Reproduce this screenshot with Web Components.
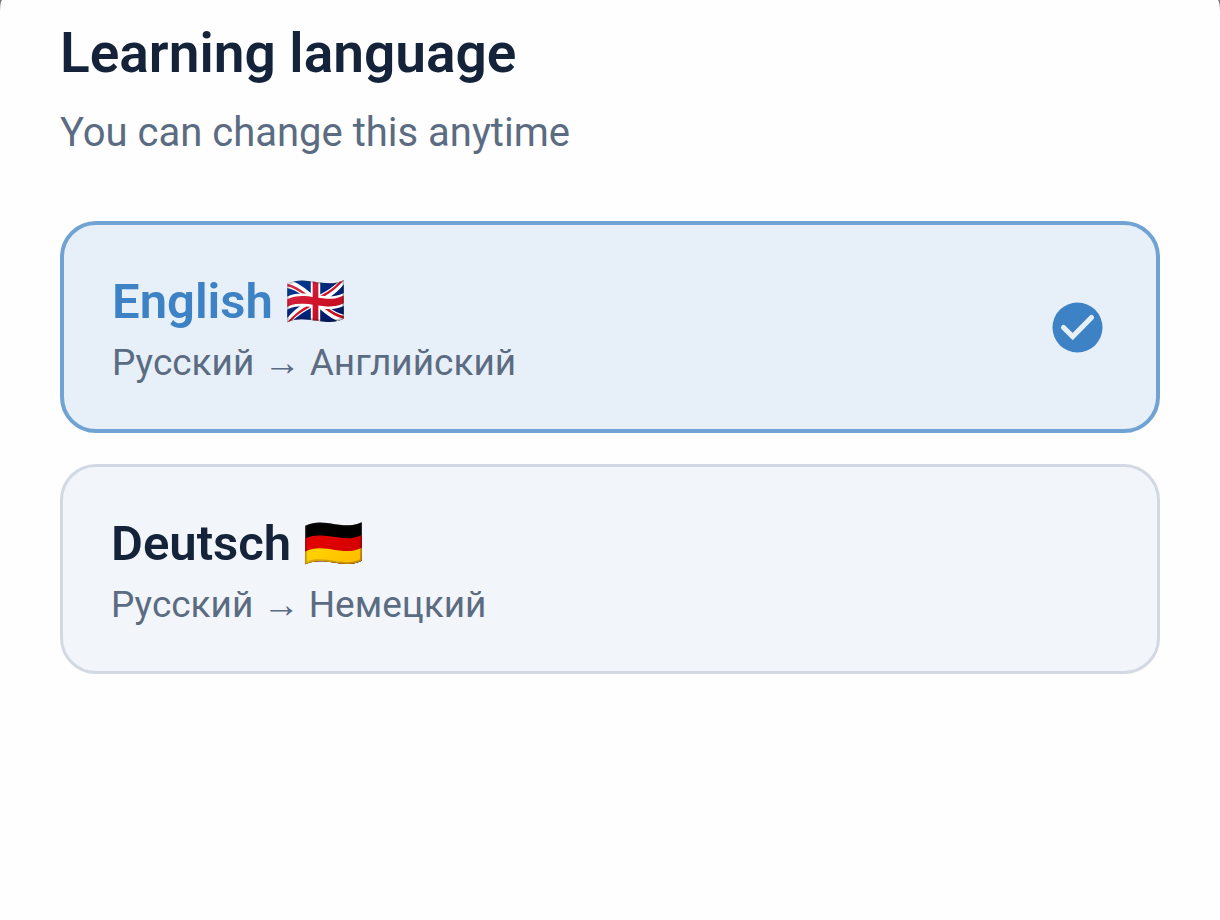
<!DOCTYPE html>
<html lang="en">
<head>
<meta charset="utf-8">
<meta name="viewport" content="width=device-width, initial-scale=1">
<title>Learning language</title>
<style>
    body {
        margin: 0;
        background: #6b6f78;
        font-family: Roboto, "Noto Sans", sans-serif;
    }
</style>
</head>
<body>
<language-sheet>
    <span slot="title">Learning language</span>
    <span slot="hint">You can change this anytime</span>
    <language-option selected>
        English 🇬🇧
        <span slot="pair">Русский → Английский</span>
    </language-option>
    <language-option>
        Deutsch 🇩🇪
        <span slot="pair">Русский → Немецкий</span>
    </language-option>
</language-sheet>

<script>
class LanguageOption extends HTMLElement {
    static get observedAttributes() {
        return ["selected"];
    }

    constructor() {
        super();
        this.attachShadow({ mode: "open" });
        this.shadowRoot.innerHTML = `
        <style>
            :host {
                display: block;
            }

            button {
                display: flex;
                align-items: center;
                justify-content: space-between;
                width: 100%;
                margin: 0;
                padding: 45px 48px;
                border: 3px solid #d3d9e3;
                border-radius: 36px;
                background: #f2f5fa;
                color: #14233a;
                font: inherit;
                text-align: left;
                cursor: pointer;
            }

            :host([selected]) button {
                border: 4px solid #70a3d4;
                background: #e7eff9;
                color: #3c82c4;
            }

            .text {
                display: flex;
                flex-direction: column;
                gap: 8px;
            }

            .name {
                font-size: 49px;
                font-weight: 600;
                line-height: 64px;
            }

            .pair {
                color: #5b6c82;
                font-size: 37px;
                line-height: 42px;
            }

            .check {
                display: none;
                flex: none;
                width: 60px;
                height: 60px;
            }

            :host([selected]) .check {
                display: block;
            }
        </style>
        <button type="button">
            <span class="text">
                <span class="name"><slot></slot></span>
                <span class="pair"><slot name="pair"></slot></span>
            </span>
            <svg class="check" viewBox="0 0 60 60" fill="none" aria-hidden="true">
                <circle cx="29.5" cy="30.5" r="25" fill="#3c82c4"/>
                <path d="M15.5 30.5 L24.7 39.5 L43.5 20.5" stroke="#e7eff9" stroke-width="5.2" stroke-linecap="round"/>
            </svg>
        </button>
        `;
        this.button = this.shadowRoot.querySelector("button");
        this.button.addEventListener("click", () => {
            this.dispatchEvent(new CustomEvent("pick", { bubbles: true }));
        });
    }

    connectedCallback() {
        this.updatePressed();
    }

    attributeChangedCallback() {
        this.updatePressed();
    }

    updatePressed() {
        this.button.setAttribute("aria-pressed", this.hasAttribute("selected"));
    }
}

class LanguageSheet extends HTMLElement {
    constructor() {
        super();
        this.attachShadow({ mode: "open" });
        this.shadowRoot.innerHTML = `
        <style>
            :host {
                display: block;
                box-sizing: border-box;
                min-height: 100vh;
                padding: 21px 60px 60px;
                border-radius: 2px 2px 0 0 / 12px 12px 0 0;
                background: #fefefe;
            }

            h1 {
                margin: 0;
                color: #14233a;
                font-size: 55px;
                font-weight: 600;
                line-height: 64px;
            }

            p {
                margin: 24px 0 64px;
                color: #5b6c82;
                font-size: 40px;
                line-height: 48px;
            }

            .options {
                display: flex;
                flex-direction: column;
                gap: 31px;
            }
        </style>
        <h1><slot name="title"></slot></h1>
        <p><slot name="hint"></slot></p>
        <div class="options"><slot></slot></div>
        `;

        // only one language can be selected at a time
        this.addEventListener("pick", (event) => {
            this.querySelectorAll("language-option").forEach((option) => {
                option.toggleAttribute("selected", option === event.target);
            });
        });
    }
}

customElements.define("language-option", LanguageOption);
customElements.define("language-sheet", LanguageSheet);
</script>
</body>
</html>
